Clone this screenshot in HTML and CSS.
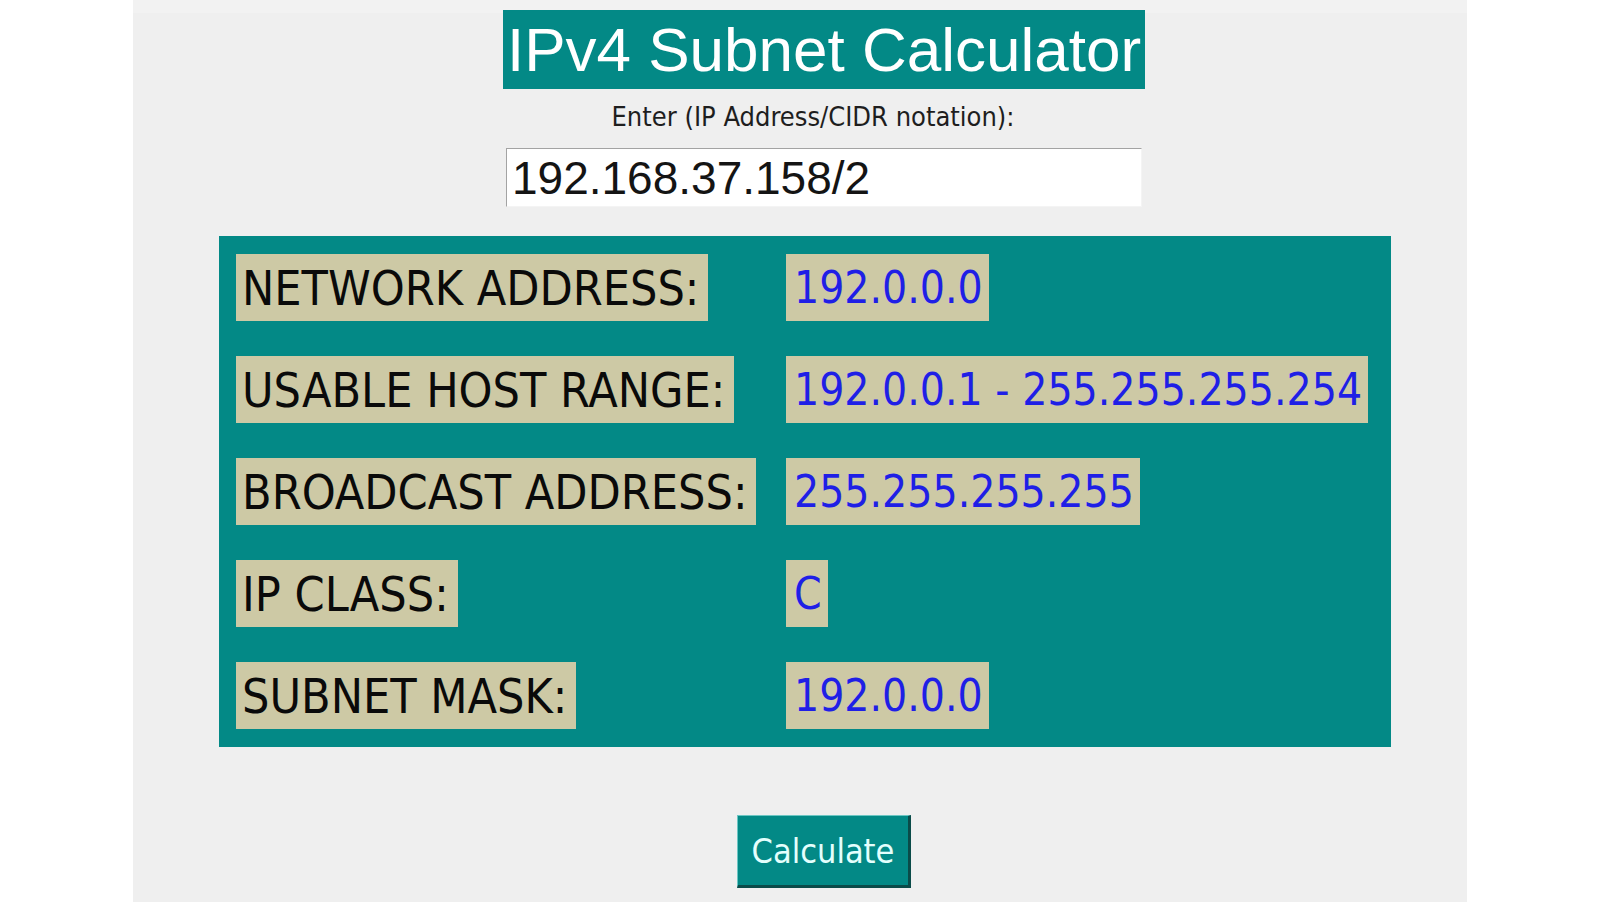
FILE: index.html
```html
<!DOCTYPE html>
<html lang="en">
<head>
<meta charset="utf-8">
<title>IPv4 Subnet Calculator</title>
<link rel="stylesheet" href="styles.css">
</head>
<body>
<div class="window">
  <h1 class="title">IPv4 Subnet Calculator</h1>
  <div class="prompt">Enter (IP Address/CIDR notation):</div>
  <input class="ip-input" type="text" value="192.168.37.158/2">
  <div class="results">
    <div class="label">NETWORK ADDRESS:</div>
    <div class="value">192.0.0.0</div>
    <div class="label">USABLE HOST RANGE:</div>
    <div class="value">192.0.0.1 - 255.255.255.254</div>
    <div class="label">BROADCAST ADDRESS:</div>
    <div class="value">255.255.255.255</div>
    <div class="label">IP CLASS:</div>
    <div class="value">C</div>
    <div class="label">SUBNET MASK:</div>
    <div class="value">192.0.0.0</div>
  </div>
  <button class="calc-btn" type="button">Calculate</button>
</div>
</body>
</html>
```

FILE: styles.css
```css
html, body {
  margin: 0;
  padding: 0;
  background: #ffffff;
}

body {
  width: 1600px;
  height: 902px;
  overflow: hidden;
}

.window {
  box-sizing: border-box;
  width: 1334px;
  height: 902px;
  margin-left: 133px;
  padding: 10px 0 0 48px;
  background: linear-gradient(#f2f2f2 0 13px, #efefef 13px);
  display: flex;
  flex-direction: column;
  align-items: center;
}

.title {
  margin: 0;
  height: 79px;
  padding: 0 4px;
  background: #038986;
  color: #ffffff;
  font-family: "Liberation Sans", Arial, sans-serif;
  font-weight: normal;
  font-size: 62px;
  line-height: 79px;
  white-space: nowrap;
}

.prompt {
  margin: 11px 22px 0 0;
  font-family: "DejaVu Sans Condensed", "DejaVu Sans", sans-serif;
  font-stretch: condensed;
  font-size: 27px;
  line-height: 34px;
  color: #1e1e1e;
}

.ip-input {
  box-sizing: border-box;
  margin-top: 14px;
  width: 636px;
  height: 59px;
  padding: 0 0 0 5px;
  border: 1px solid #f4f4f4;
  border-top-color: #a3a3a3;
  border-left-color: #a3a3a3;
  background: #ffffff;
  color: #141414;
  font-family: "Liberation Sans", Arial, sans-serif;
  font-size: 46px;
  outline: none;
}

.results {
  box-sizing: border-box;
  margin: 29px 38px 0 0;
  width: 1172px;
  height: 511px;
  padding: 18px 17px;
  background: #038986;
  display: grid;
  grid-template-columns: 550px 1fr;
  grid-auto-rows: 67px;
  row-gap: 35px;
}

.label,
.value {
  justify-self: start;
  height: 67px;
  display: flex;
  align-items: center;
  padding: 0 6px;
  background: #cdc9a5;
  font-family: "DejaVu Sans Condensed", "DejaVu Sans", sans-serif;
  font-stretch: condensed;
  white-space: nowrap;
}

.label {
  font-size: 48px;
  color: #0a0a0a;
  padding-right: 9px;
}

.value {
  padding: 0 6px 0 8px;
  font-size: 44px;
  color: #1f1fe6;
}

.calc-btn {
  box-sizing: border-box;
  margin-top: 68px;
  width: 174px;
  height: 73px;
  padding: 0;
  background: #038986;
  border-style: solid;
  border-width: 1px 3px 3px 1px;
  border-color: #6cc6c3 #0b4b49 #0b4b49 #6cc6c3;
  color: #e4fffd;
  font-family: "DejaVu Sans Condensed", "DejaVu Sans", sans-serif;
  font-stretch: condensed;
  font-size: 34px;
  cursor: pointer;
}
```
